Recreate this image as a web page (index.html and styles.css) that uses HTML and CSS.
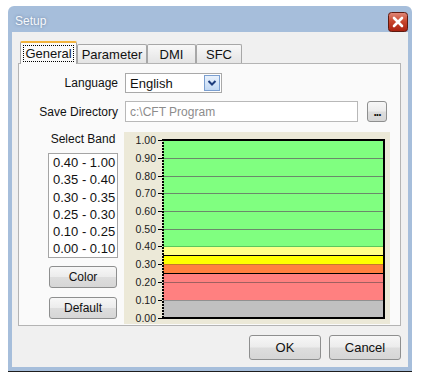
FILE: index.html
```html
<!DOCTYPE html>
<html lang="en">
<head>
    <meta charset="UTF-8">
    <meta name="viewport" content="width=device-width, initial-scale=1.0">
    <title>Setup</title>
    <link rel="stylesheet" href="styles.css">
</head>
<body>
    <div class="window">
        <div class="title-bar">
            <span class="title">Setup</span>
            <button class="close-btn" aria-label="Close">
                <svg width="20" height="20" viewBox="0 0 20 20">
                    <defs>
                        <linearGradient id="closeGrad" x1="0" y1="0" x2="0" y2="1">
                            <stop offset="0" stop-color="#e08a7c"/>
                            <stop offset="0.45" stop-color="#c9482f"/>
                            <stop offset="1" stop-color="#a8200f"/>
                        </linearGradient>
                    </defs>
                    <rect x="0.5" y="0.5" width="19" height="19" rx="3" fill="url(#closeGrad)" stroke="#5e1a10"/>
                    <path d="M6 6 L14 14 M14 6 L6 14" stroke="#fff" stroke-width="2.6" stroke-linecap="round"/>
                </svg>
            </button>
        </div>

        <div class="client">
            <div class="tabs">
                <div class="tab active" style="width: 57px;"><span class="focus">General</span></div>
                <div class="tab" style="width: 70px;">Parameter</div>
                <div class="tab" style="width: 49px;">DMI</div>
                <div class="tab" style="width: 46px;">SFC</div>
            </div>

            <div class="tab-page">
                <div class="form-row">
                    <label class="field-label">Language</label>
                    <div class="combo">
                        <span>English</span>
                        <span class="combo-btn">
                            <svg width="14" height="14" viewBox="0 0 14 14">
                                <path d="M3.5 5 L7 8.5 L10.5 5" fill="none" stroke="#1d3c7c" stroke-width="2"/>
                            </svg>
                        </span>
                    </div>
                </div>

                <div class="form-row path-row">
                    <label class="field-label">Save Directory</label>
                    <div class="path-input">c:\CFT Program</div>
                    <button class="btn browse-btn">...</button>
                </div>

                <div class="band-area">
                    <div class="band-col">
                        <div class="band-title">Select Band</div>
                        <ul class="band-list">
                            <li>0.40 - 1.00</li>
                            <li>0.35 - 0.40</li>
                            <li>0.30 - 0.35</li>
                            <li>0.25 - 0.30</li>
                            <li>0.10 - 0.25</li>
                            <li>0.00 - 0.10</li>
                        </ul>
                        <button class="btn side-btn">Color</button>
                        <button class="btn side-btn default-btn">Default</button>
                    </div>

                    <div class="chart">
                        <svg width="266" height="192" viewBox="0 0 266 192">
                            <!-- bands -->
                            <rect x="39" y="8" width="221" height="106" fill="#80ff80"/>
                            <rect x="39" y="114" width="221" height="9" fill="#ffff88"/>
                            <rect x="39" y="123" width="221" height="9" fill="#ffff00"/>
                            <rect x="39" y="132" width="221" height="9" fill="#ff8040"/>
                            <rect x="39" y="141" width="221" height="27" fill="#ff8080"/>
                            <rect x="39" y="168" width="221" height="18" fill="#c0c0c0"/>

                            <!-- grid lines -->
                            <g stroke="#6b8a6b" stroke-width="1">
                                <line x1="39" y1="26.5" x2="260" y2="26.5"/>
                                <line x1="39" y1="44.5" x2="260" y2="44.5"/>
                                <line x1="39" y1="61.5" x2="260" y2="61.5"/>
                                <line x1="39" y1="79.5" x2="260" y2="79.5"/>
                                <line x1="39" y1="97.5" x2="260" y2="97.5"/>
                            </g>
                            <line x1="39" y1="114.5" x2="260" y2="114.5" stroke="#5cc85c"/>
                            <line x1="39" y1="123.5" x2="260" y2="123.5" stroke="#000"/>
                            <line x1="39" y1="132.5" x2="260" y2="132.5" stroke="#c8782a"/>
                            <line x1="39" y1="141.5" x2="260" y2="141.5" stroke="#000"/>
                            <line x1="39" y1="150.5" x2="260" y2="150.5" stroke="#a06060"/>
                            <line x1="39" y1="168.5" x2="260" y2="168.5" stroke="#909090"/>

                            <!-- frame -->
                            <line x1="38" y1="8" x2="261" y2="8" stroke="#000" stroke-width="2"/>
                            <line x1="38" y1="186" x2="261" y2="186" stroke="#000" stroke-width="2"/>
                            <line x1="260" y1="7" x2="260" y2="187" stroke="#000" stroke-width="2"/>
                            <line x1="39" y1="7" x2="39" y2="187" stroke="#000" stroke-width="2" stroke-dasharray="2 1"/>

                            <!-- ticks -->
                            <g stroke="#000" stroke-width="1">
                                <line x1="34" y1="8.5" x2="38" y2="8.5"/>
                                <line x1="34" y1="26.5" x2="38" y2="26.5"/>
                                <line x1="34" y1="44.5" x2="38" y2="44.5"/>
                                <line x1="34" y1="61.5" x2="38" y2="61.5"/>
                                <line x1="34" y1="79.5" x2="38" y2="79.5"/>
                                <line x1="34" y1="97.5" x2="38" y2="97.5"/>
                                <line x1="34" y1="114.5" x2="38" y2="114.5"/>
                                <line x1="34" y1="132.5" x2="38" y2="132.5"/>
                                <line x1="34" y1="150.5" x2="38" y2="150.5"/>
                                <line x1="34" y1="168.5" x2="38" y2="168.5"/>
                                <line x1="34" y1="186.5" x2="38" y2="186.5"/>
                            </g>

                            <!-- axis labels -->
                            <g class="axis-label" text-anchor="end">
                                <text x="32" y="12">1.00</text>
                                <text x="32" y="30">0.90</text>
                                <text x="32" y="48">0.80</text>
                                <text x="32" y="65">0.70</text>
                                <text x="32" y="83">0.60</text>
                                <text x="32" y="101">0.50</text>
                                <text x="32" y="118">0.40</text>
                                <text x="32" y="136">0.30</text>
                                <text x="32" y="154">0.20</text>
                                <text x="32" y="172">0.10</text>
                                <text x="32" y="190">0.00</text>
                            </g>
                        </svg>
                    </div>
                </div>
            </div>

            <div class="dialog-buttons">
                <button class="btn dlg-btn">OK</button>
                <button class="btn dlg-btn">Cancel</button>
            </div>
        </div>
    </div>
</body>
</html>
```

FILE: styles.css
```css
:root {
    --frame: #a6bedb;
    --client-bg: #f0f0f0;
    --page-bg: #fafafa;
    --border: #b4b4b4;
    --text: #111;
    --text-disabled: #8c8c8c;
    --chart-bg: #ece9d8;
}

* { box-sizing: border-box; margin: 0; padding: 0; }

body {
    font-family: "Liberation Sans", Arial, sans-serif;
    font-size: 12px;
    color: var(--text);
    background: #fff;
}

.window {
    margin: 6px 0 0 8px;
    width: 404px;
    background: var(--frame);
    border-radius: 6px 6px 0 0;
    border-bottom: 1px solid #1e1e1e;
    padding: 0 4px 4px;
}

.title-bar {
    height: 26px;
    display: flex;
    align-items: center;
    justify-content: space-between;
    padding-left: 3px;
}

.title {
    color: #f6f9fd;
    font-size: 12px;
    text-shadow: 0 0 3px rgba(90, 110, 140, 0.8);
    margin-top: 3px;
}

.close-btn {
    width: 20px;
    height: 20px;
    border: none;
    background: none;
    display: flex;
    margin-top: 6px;
}

.client {
    background: var(--client-bg);
    height: 335px;
    padding: 9px 7px 0 6px;
}

/* tabs */
.tabs {
    display: flex;
    align-items: flex-end;
    height: 22px;
    margin-left: 2px;
}

.tab {
    height: 19px;
    border: 1px solid #a7a7a7;
    border-bottom: none;
    border-radius: 2px 2px 0 0;
    background: linear-gradient(#f8f8f8, #e4e4e4);
    display: flex;
    align-items: center;
    justify-content: center;
    font-size: 13px;
}

.tab.active {
    position: relative;
    z-index: 1;
    height: 23px;
    margin-bottom: -1px;
    background: var(--page-bg);
    border-top: 2px solid #f2b33d;
    padding-bottom: 1px;
}

.focus {
    outline: 1px dotted #000;
    padding: 0 1px;
    line-height: 15px;
}

.tab-page {
    height: 263px;
    border: 1px solid var(--border);
    background: var(--page-bg);
    padding-top: 9px;
}

/* form rows */
.form-row {
    display: flex;
    align-items: center;
    height: 20px;
}

.path-row {
    height: 21px;
    margin-top: 8px;
}

.field-label {
    width: 99px;
    margin-right: 7px;
    text-align: right;
}

.combo {
    width: 97px;
    height: 20px;
    border: 1px solid #a9a9a9;
    background: #fff;
    display: flex;
    align-items: center;
    justify-content: space-between;
    padding-left: 4px;
    padding-right: 1px;
    font-size: 13px;
}

.combo-btn {
    width: 16px;
    height: 16px;
    border: 1px solid #7b9fd0;
    background: linear-gradient(#e8f1fc, #c2d8f3);
    display: flex;
    align-items: center;
    justify-content: center;
}

.path-input {
    width: 233px;
    height: 21px;
    border: 1px solid #b8b8b8;
    background: #fff;
    color: var(--text-disabled);
    padding-left: 4px;
    display: flex;
    align-items: center;
    font-size: 12px;
}

/* buttons */
.btn {
    font-family: inherit;
    font-size: 12px;
    color: var(--text);
    border: 1px solid #8e8f8f;
    border-radius: 3px;
    background: linear-gradient(#f7f7f7, #ececec 48%, #dddddd 52%, #d6d6d6);
}

.browse-btn {
    width: 20px;
    height: 21px;
    margin-left: 9px;
    font-weight: bold;
    letter-spacing: -1px;
    line-height: 14px;
}

/* band selection */
.band-area {
    display: flex;
    margin-top: 10px;
    margin-left: 29px;
}

.band-col {
    width: 70px;
    display: flex;
    flex-direction: column;
    align-items: center;
}

.band-title {
    height: 14px;
    line-height: 14px;
    font-size: 12px;
}

.band-list {
    list-style: none;
    width: 70px;
    height: 105px;
    margin-top: 7px;
    border: 1px solid #a5a5a5;
    background: #fff;
    padding: 0 0 0 4px;
    font-size: 13px;
    line-height: 17.3px;
}

.side-btn {
    width: 68px;
    height: 22px;
    margin-top: 8px;
}

.default-btn {
    margin-top: 9px;
}

.chart {
    width: 266px;
    height: 192px;
    margin-left: 6px;
    background: var(--chart-bg);
}

.chart svg {
    display: block;
}

.axis-label {
    font-family: "Liberation Sans", Arial, sans-serif;
    font-size: 10.5px;
    fill: #1a1a1a;
}

/* dialog buttons */
.dialog-buttons {
    display: flex;
    justify-content: flex-end;
    gap: 8px;
    margin-top: 9px;
}

.dlg-btn {
    width: 72px;
    height: 25px;
    font-size: 13px;
}
```
